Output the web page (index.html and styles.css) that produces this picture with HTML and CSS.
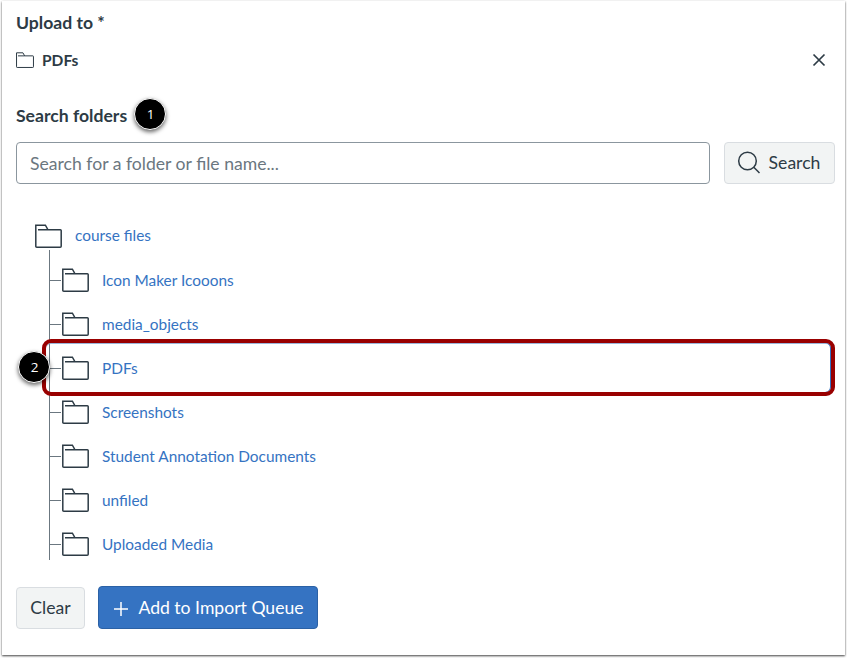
FILE: index.html
```html
<!DOCTYPE html>
<html lang="en">
<head>
<meta charset="utf-8">
<title>Upload to</title>
<link rel="stylesheet" href="styles.css">
</head>
<body>
<svg width="0" height="0" class="defs" aria-hidden="true">
  <symbol id="folder" viewBox="0 0 27 24">
    <path d="M.8 22.2V1.2H10.4L13 5.8H25.4Q26.2 5.8 26.2 6.6V22.2Q26.2 23.2 25.2 23.2H1.8Q.8 23.2 .8 22.2ZM3 5.8H13"/>
  </symbol>
</svg>
<main class="panel">
  <h2 class="title">Upload to *</h2>
  <div class="selected">
    <svg class="small-folder"><use href="#folder"/></svg>
    <span>PDFs</span>
    <button class="close" aria-label="Clear selection"><svg width="14" height="14" viewBox="0 0 14 14"><path d="M1.5 1.5l11 11M12.5 1.5l-11 11"/></svg></button>
  </div>
  <div class="search-label"><label for="q">Search folders</label><span class="badge">1</span></div>
  <form class="search-row">
    <input id="q" type="text" placeholder="Search for a folder or file name...">
    <button type="button" class="button search"><svg width="24" height="24" viewBox="0 0 24 24"><circle cx="10.5" cy="10" r="8.8"/><path d="M16.8 16.2l5.7 5.8"/></svg><span>Search</span></button>
  </form>
  <div class="tree">
    <div class="root"><svg class="folder"><use href="#folder"/></svg><a>course files</a></div>
    <ul>
      <li><svg class="folder"><use href="#folder"/></svg><a>Icon Maker Icooons</a></li>
      <li><svg class="folder"><use href="#folder"/></svg><a>media_objects</a></li>
      <li class="current"><svg class="folder"><use href="#folder"/></svg><a>PDFs</a><span class="outline"></span><span class="badge">2</span></li>
      <li><svg class="folder"><use href="#folder"/></svg><a>Screenshots</a></li>
      <li><svg class="folder"><use href="#folder"/></svg><a>Student Annotation Documents</a></li>
      <li><svg class="folder"><use href="#folder"/></svg><a>unfiled</a></li>
      <li><svg class="folder"><use href="#folder"/></svg><a>Uploaded Media</a></li>
    </ul>
  </div>
  <div class="actions">
    <button class="button clear">Clear</button>
    <button class="button primary"><svg width="14" height="14" viewBox="0 0 14 14"><path d="M7 0v14M0 7h14"/></svg><span>Add to Import Queue</span></button>
  </div>
</main>
</body>
</html>
```

FILE: styles.css
```css
* { box-sizing: border-box; }
body {
  margin: 0;
  height: 658px;
  padding: 1px 2px 3px;
  background: #fff;
  color: #2d3b45;
  font-family: Lato, sans-serif;
  font-size: 16px;
  overflow: hidden;
}
.defs { position: absolute; }
svg { fill: none; stroke: #2d3b45; stroke-width: 1.5; flex: none; }
.panel {
  height: 654px;
  padding: 9px 10px 0 14px;
  background: #fff;
  box-shadow: 0 1px 2px rgba(0, 0, 0, .75);
}
.title { margin: 0; font-size: 17.6px; line-height: 26px; font-weight: 700; }
.selected {
  display: flex;
  align-items: center;
  height: 26px;
  margin-top: 11px;
  font-size: 15.5px;
  font-weight: 700;
}
.selected span { padding-bottom: 1px; }
.small-folder { width: 18px; height: 16px; margin-right: 8px; }
.close {
  display: flex;
  margin-left: auto;
  margin-right: 9px;
  padding: 0;
  border: 0;
  background: none;
}
.close svg { stroke-width: 1.7; }
.search-label {
  display: flex;
  align-items: center;
  gap: 7px;
  height: 30px;
  margin-top: 26px;
  font-size: 17.6px;
  font-weight: 700;
}
.search-label label { padding-top: 2px; }
.badge {
  display: flex;
  align-items: center;
  justify-content: center;
  width: 32px;
  height: 32px;
  padding-left: 1px;
  border: 1px solid #fff;
  border-radius: 50%;
  background: #000;
  color: #fff;
  font: 13.5px "Open Sans", sans-serif;
  box-shadow: 0 2px 4px rgba(0, 0, 0, .6);
}
.search-row { display: flex; gap: 14px; margin: 13px 0 0; }
input {
  flex: 1;
  min-width: 0;
  height: 42px;
  padding: 0 13px;
  border: 1px solid #8b969e;
  border-radius: 4px;
  font: 17.6px Lato, sans-serif;
  outline: 0;
}
input::placeholder { color: #6b7780; opacity: 1; }
.button {
  display: flex;
  align-items: center;
  justify-content: center;
  height: 42px;
  padding: 0;
  border: 1px solid #d9dde1;
  border-radius: 4px;
  background: #f2f4f4;
  color: #2d3b45;
  font: 17.6px Lato, sans-serif;
}
.search { width: 111px; gap: 8px; padding-right: 2px; }
.search span { padding-bottom: 2px; }
.tree { margin-top: 30px; padding-left: 19px; color: #3573c2; font-size: 15.4px; }
.root, li { display: flex; align-items: center; height: 44px; }
.root a { padding-bottom: 2px; }
li a { padding-bottom: 1px; }
.folder { width: 27px; height: 24px; margin-right: 13px; }
ul {
  position: relative;
  list-style: none;
  margin: 0 0 0 14px;
  padding: 0;
}
ul::before {
  content: "";
  position: absolute;
  left: 0;
  top: -8px;
  bottom: 6px;
  width: 1px;
  background: #6b7780;
}
li { position: relative; }
li::before { content: ""; width: 12px; height: 1px; margin-right: 1px; background: #6b7780; }
.outline {
  position: absolute;
  left: -7px;
  right: 0;
  top: -7px;
  height: 57px;
  border: 4px solid #900;
  border-radius: 9px;
  box-shadow: inset -1px 0 #3372c2, inset 0 1px #9bb6da;
}
li .badge { position: absolute; left: -31px; top: 5px; }
.actions { display: flex; align-items: center; gap: 13px; margin-top: 20px; }
.clear { width: 69px; }
.primary {
  width: 220px;
  height: 43px;
  gap: 10px;
  padding-left: 2px;
  border-color: #2b61a5;
  background: #3573c2;
  color: #fff;
}
.primary svg { stroke: #fff; position: relative; top: 1px; }
```
